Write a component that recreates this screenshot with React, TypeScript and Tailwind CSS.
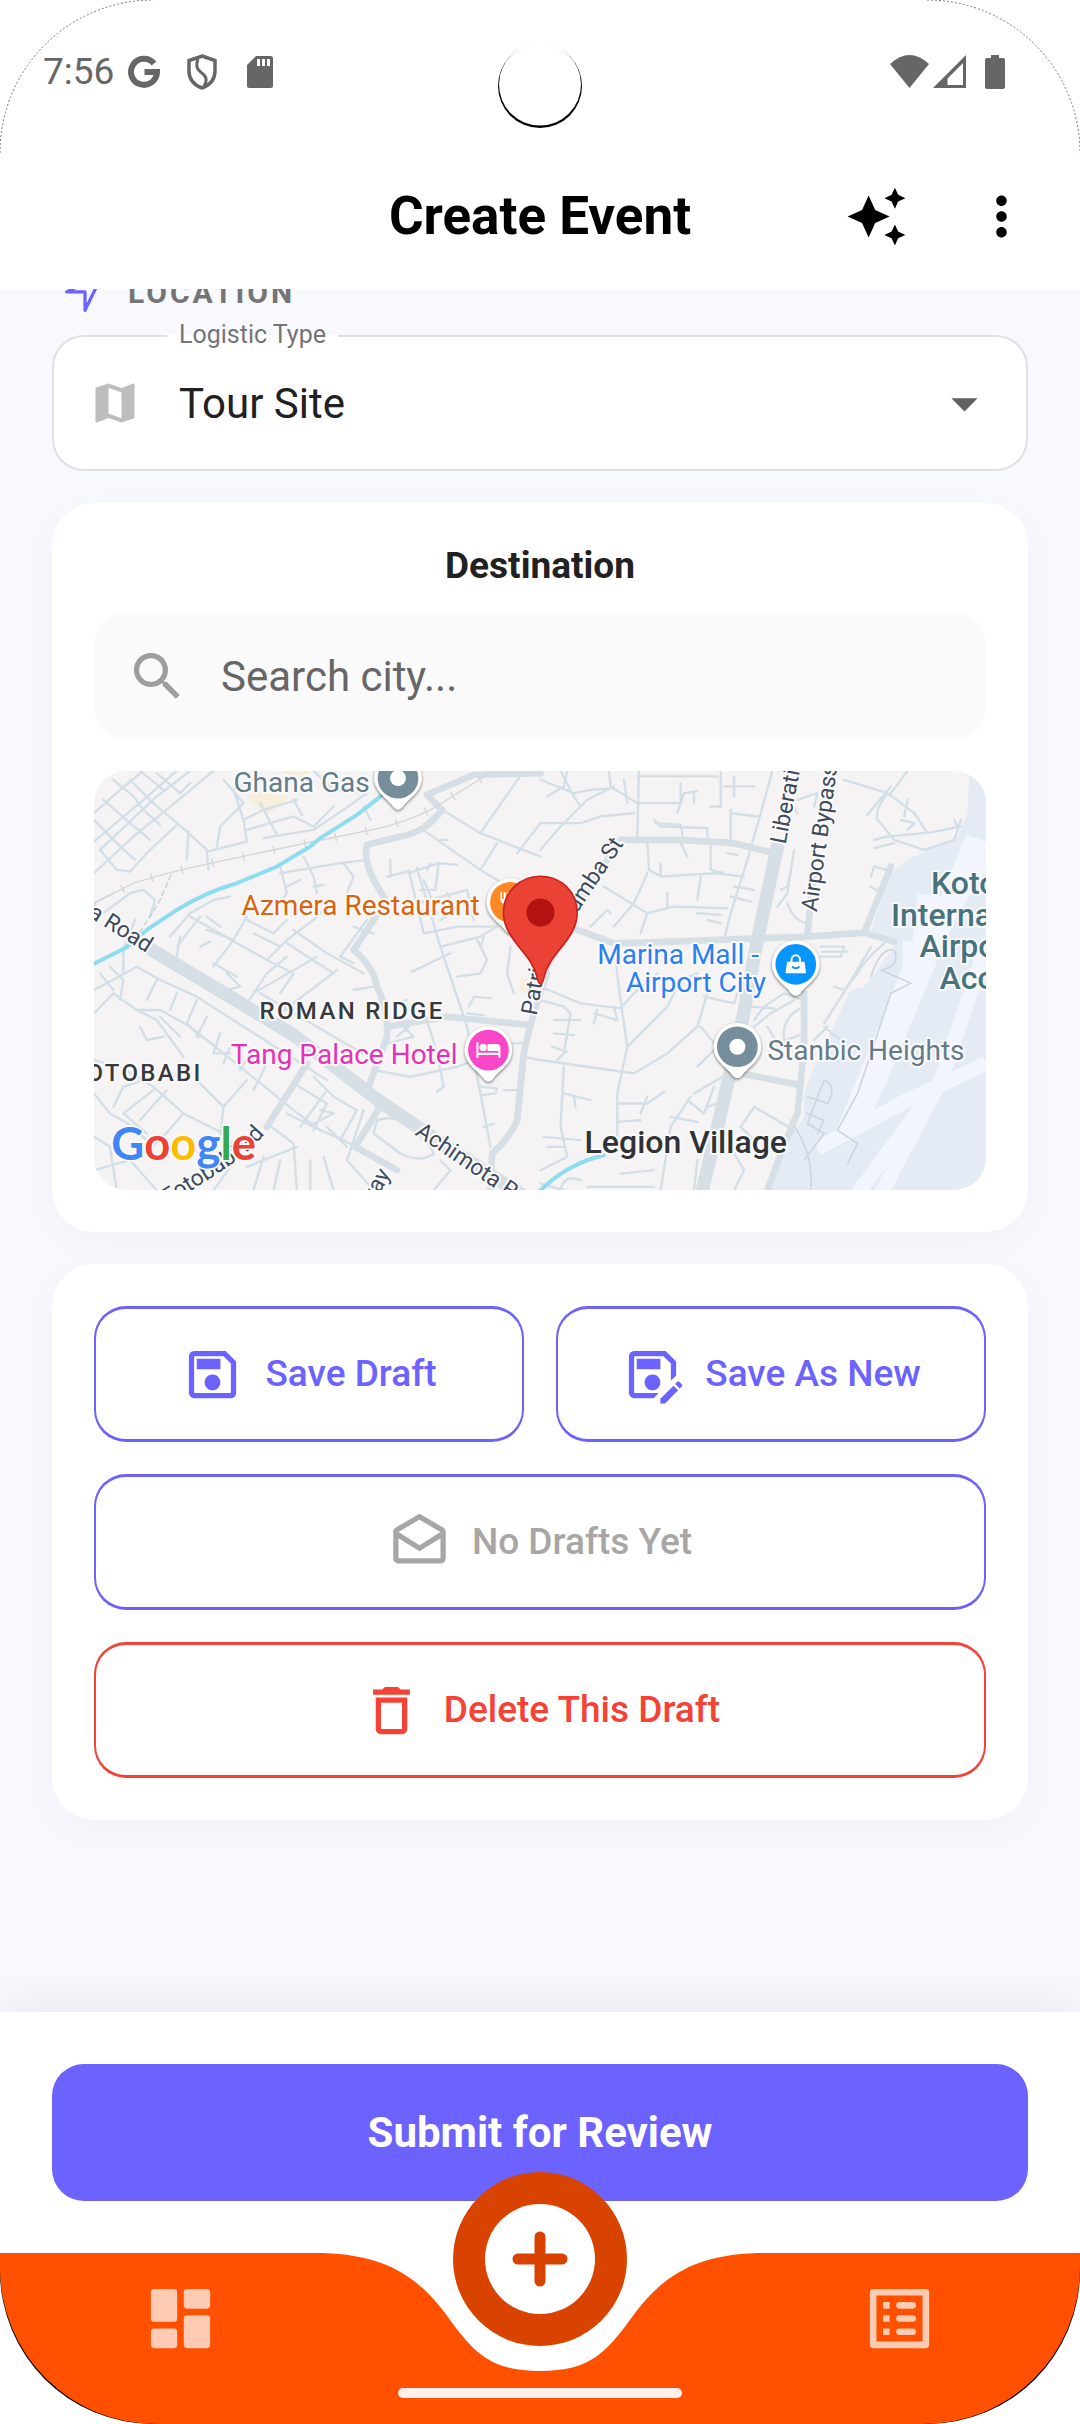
import type { ReactNode } from "react";
import {
  MdArrowDropDown,
  MdAutoAwesome,
  MdDeleteOutline,
  MdMap,
  MdMoreVert,
  MdOutlineDrafts,
  MdOutlineSave,
  MdOutlineSaveAs,
  MdSearch,
} from "react-icons/md";
import { clsx } from "clsx";

const logisticTypes = ["Tour Site", "Hotel", "Restaurant", "Airport Transfer"];

function StatusBar() {
  return (
    <div className="relative flex h-[143px] items-center justify-between pl-[43px] pr-[75px] text-[#666666]">
      <div className="flex items-center">
        <span className="w-[84px] text-[37px] leading-[42px]">7:56</span>
        <svg viewBox="0 0 34 34" className="h-[34px] w-[34px]" aria-hidden="true">
          <path
            d="M27 8.5A13 13 0 1 0 30 17H17.5"
            fill="none"
            stroke="currentColor"
            strokeWidth="6"
          />
        </svg>
        <svg viewBox="0 0 30 36" className="ml-[26px] h-[36px] w-[30px]" aria-hidden="true">
          <path
            d="M15 2L28 6.500V17C28 25 23 31 15 34C7 31 2 25 2 17V6.500Z"
            fill="none"
            stroke="currentColor"
            strokeWidth="3.500"
          />
          <path
            d="M11 5C8 14 11 16 16 20C20 23 20 28 17 32"
            fill="none"
            stroke="currentColor"
            strokeWidth="3"
          />
        </svg>
        <svg viewBox="0 0 26 32" className="ml-[30px] h-[32px] w-[26px]" aria-hidden="true">
          <path
            fillRule="evenodd"
            d="M9 0H23.500Q26 0 26 2.500V29.500Q26 32 23.500 32H2.500Q0 32 0 29.500V9ZM10 3V10H13V3ZM15 3V10H18V3ZM20 3V10H23V3Z"
            fill="currentColor"
          />
        </svg>
      </div>

      <svg
        viewBox="0 0 84 84"
        className="absolute left-1/2 top-[44px] h-[84px] w-[84px] -translate-x-1/2"
        aria-hidden="true"
      >
        <circle cx="42" cy="42" r="42" fill="#000" />
        <circle cx="42" cy="40.500" r="41" fill="#fff" />
      </svg>

      <div className="flex items-center">
        <svg viewBox="0 0 39 33" className="h-[33px] w-[39px]" aria-hidden="true">
          <path d="M0 9Q19.500 -9 39 9L19.500 33Z" fill="currentColor" />
        </svg>
        <svg viewBox="0 0 33 33" className="ml-[4px] h-[33px] w-[33px]" aria-hidden="true">
          <path
            fillRule="evenodd"
            d="M33 0V33H0ZM30 8L14.500 23.500V30H30Z"
            fill="currentColor"
          />
        </svg>
        <svg viewBox="0 0 20 34" className="ml-[19px] h-[34px] w-[20px]" aria-hidden="true">
          <path
            d="M6 0H14V3H18Q20 3 20 5V32Q20 34 18 34H2Q0 34 0 32V5Q0 3 2 3H6Z"
            fill="currentColor"
          />
        </svg>
      </div>
    </div>
  );
}

function AppBar() {
  return (
    <div className="grid h-[146px] grid-cols-[1fr_auto_1fr] items-center">
      <span />
      <h1 className="text-[53px] font-bold leading-[60px] text-black">Create Event</h1>
      <div className="flex items-center justify-end gap-[62px] pr-[47px] text-black">
        <button type="button" aria-label="Generate with AI">
          <MdAutoAwesome className="size-[63px]" />
        </button>
        <button type="button" aria-label="More options">
          <MdMoreVert className="size-[63px]" />
        </button>
      </div>
    </div>
  );
}

const majorRoads = [
  "M215 570L400 680L640 825L900 1025L1100 1160L1380 1340",
  "M2090 260L2030 540L1985 780L1920 1060L1860 1310",
];

const mediumRoads = [
  "M1380 40L1180 45L1040 105L1085 150Q1040 215 960 230L860 255Q850 300 880 360L915 420L880 480L820 570Q880 620 890 680Q925 750 920 830L865 980",
  "M920 800L1100 770L1345 795",
  "M1400 640Q1350 780 1330 880L1310 1080Q1290 1130 1235 1180L1230 1300",
  "M680 910L560 1100",
  "M905 1030L825 1160L950 1230",
  "M1380 470L1480 505L1600 550L1780 545L2030 535L2180 530L2350 518L2440 545",
  "M1400 620L1500 420L1620 240L1800 240L1960 250L2080 280",
  "M2180 520L2200 330",
  "M2170 700L2170 860L2150 1060Q2110 1150 2060 1290",
  "M1980 940L2160 975",
  "M2350 518L2430 320",
];

const minorRoads = [
  "M42 160L120 90L190 33M42 245L190 120L290 33M60 270L230 110L330 33M42 340L160 230L320 100L400 33",
  "M100 60L160 110L190 150L240 195M70 120L150 190L210 240M42 180L110 250L165 300M150 60L220 130L320 215L380 270L385 330",
  "M60 270L110 330L150 335L200 280L290 195M325 215L320 300M230 40L300 100L330 70M180 33L250 90",
  "M380 275L500 245L490 180L550 150L650 120M410 260L420 200L490 130L430 60M490 180L460 90L520 60M500 210L640 170L700 200L760 140",
  "M550 235L700 210L790 150L860 100M540 130L590 225M640 120L665 165M700 33L760 90L850 100M850 140L870 180",
  "M600 320L620 400L590 440M670 290L700 350L710 400M600 340L780 310L860 300M620 380L660 360M700 380L730 375M790 310L820 350L800 400L840 420",
  "M130 640L130 570L165 480M42 480L150 400L190 390L225 420L210 470M42 430L100 400",
  "M270 530L330 460L400 420L450 410M330 470L560 600L620 540L700 480L740 440M290 560L360 470M380 510L460 540L400 620M460 540L500 470M300 530L290 590",
  "M640 510L740 580L850 640M620 550L760 640M560 600L640 640L600 700M500 730L560 640L620 590M520 700L710 590M600 760L770 630M540 700L880 900",
  "M500 480L580 520L620 480M520 520L600 560M440 640L480 680L440 690M360 560L390 545M400 610L470 650M380 470L420 500",
  "M42 690L170 620L240 660L350 710L600 870L740 960M42 760L100 700L170 750L240 750L330 800L480 920L640 1050L720 1110",
  "M90 620L130 660L120 720M60 640L100 690M170 750L230 780L310 890M230 660L200 720M290 700L270 750M350 720L320 790L360 830",
  "M180 800L200 840L250 830M240 770L300 830M380 770L350 830M420 820L400 880L450 880M450 860L430 910M510 880L480 930M560 910L520 990",
  "M42 900L120 920L220 980L310 1060L430 1120L500 1200M42 1000L90 1060L160 1100L220 1160M100 1040L130 980L190 960M220 990L130 1060L200 1120M260 990L180 1080",
  "M310 1060L240 1140L170 1190M430 1040L350 960M430 1040L500 960M430 1040L420 1130M560 1090L640 1150L650 1290M620 1060L720 1110L790 1140L880 1190",
  "M640 970L740 1030L700 1110M700 950L760 1010L830 1050M740 990L660 1100M720 1050L760 1060L700 1090M830 1050L780 1140M850 1050L800 1200L880 1290M800 1160L740 1100",
  "M42 1130L90 1160L110 1290M42 1230L150 1200L230 1290M480 1180L400 1290M550 1190L520 1290M650 1160L500 1220M600 1200L580 1290M690 1200L690 1290M730 1190L760 1290",
  "M880 1120L890 1080Q950 1060 1020 1110L1060 1180Q1020 1210 960 1180L880 1120M1080 1200L1110 1230L1060 1290M1130 1200L1180 1210",
  "M1020 205L1200 330L1380 440M1020 205L1080 150M1085 150L1200 220L1380 290M1200 220L1330 33M1250 250L1200 330M1100 240L1080 240M1310 280L1380 190",
  "M985 330L1030 520L1130 500L1250 500M1010 325L1080 560L1160 800L1200 1000L1230 1160M985 340L1075 310L1065 390L1020 390M1050 310L1040 330M920 350L980 335M930 350L930 300M1075 310L1130 315",
  "M1010 430L1160 390L1180 480M1030 360L1070 460M1100 400L1130 450L1080 480M1080 560L1200 530L1250 500M1190 540L1210 580L1220 600L1200 640L1130 650M1210 530L1200 560",
  "M995 635L1110 580M1040 780L1070 880L1090 980L1070 995M920 850L1000 830M970 800L1000 830M1165 740L1180 710L1230 715M1160 760L1210 765M880 930L990 950L1130 920L1210 890",
  "M1200 980L1250 985L1245 1000L1205 1005M1270 990L1310 990M1240 1090L1210 1100M1330 890L1380 900M1290 850L1340 850M1290 560L1280 640L1300 700",
  "M820 690L880 680M940 730L980 720M950 830L985 800L960 770M820 610L780 590L860 480M880 520L820 500",
  "M1380 60L1480 100L1530 90L1600 85M1380 190L1500 190L1560 170L1660 160M1380 270L1440 200L1520 120L1600 80M1440 33L1480 110L1500 140M1400 110L1450 80L1460 33",
  "M1675 33L1670 230M1585 33L1590 80L1670 130L1800 130L1800 70M1630 60L1640 130M1670 50L1910 50M1920 33L1920 140L1890 140M1790 160L1810 100L1850 95M1840 130L1840 100",
  "M1720 180L1740 200L1880 205L1880 230M1725 190L1800 195L1810 250M1930 80L2020 80M1960 50L1960 110M2075 33L2040 160L2000 300L1950 460L1930 540M1950 160L2030 170M1950 150L1950 240",
  "M1700 245L1705 330L1740 350L1900 340L1990 350M1570 380L1700 460L1780 440L1940 445M1700 340L1660 430L1600 500M1700 460L1680 520M1890 260L1890 330L1930 340M1800 250L1820 290M1740 350L1740 310",
  "M1530 500L1580 450L1590 460M1850 460L1920 465M1880 480L1920 490M1760 440L1760 400M1860 350L1850 420M1940 280L1970 285M1960 380L2020 390M1950 410L2010 425",
  "M1600 560L1620 720L1640 860L1610 1000L1610 1150M1380 680L1500 730L1620 745L1660 700L1730 640M1640 860L1760 740L1800 660L1850 640M1540 760L1610 780L1600 740M1550 750L1540 790",
  "M1380 720L1450 740L1470 760L1450 880L1430 900M1420 780L1500 780M1420 820L1480 825M1415 860L1460 875M1380 900L1520 920L1660 940L1760 880L1850 800L1880 700",
  "M1450 920L1440 1100L1460 1190L1380 1230M1450 1000L1530 1020M1480 1010L1485 1040M1390 1130L1500 1140M1400 1160L1450 1160M1610 1030L1700 1030L1750 995M1680 1060L1700 1010M1610 1085L1680 1080",
  "M1860 800L1910 860L1850 920M1840 1000L1960 930M1830 1010L1770 1100L1740 1290M1820 1020L1870 1060L1900 980M1770 1070L1850 1085M1880 1040L1910 1030M1870 710L1960 730L1970 700",
  "M1980 1100L2020 1040L2140 1110L2100 1170M1980 1100L2020 1140L1960 1180L1990 1230L1960 1290M1380 1270L1450 1290M1440 1290Q1450 1240 1500 1260M1520 1280L1720 1280M1850 1200L1840 1290M1620 1240L1720 1230",
  "M2010 740L2080 745M2020 780L2050 740L2110 700L2170 720M2060 800L2090 850L2170 820M2020 800L2070 760L2140 720M2110 840Q2100 770 2170 740M2140 270L2120 400L2090 440M2130 330L2120 380L2100 390",
  "M2120 430Q2140 490 2190 490M2150 120L2210 100L2200 140M2110 90L2150 160M2220 560L2290 560L2280 590L2220 590M2225 575L2300 575M2260 680L2290 690L2330 640Q2350 600 2410 550",
  "M2290 60L2420 100L2500 160L2540 220L2640 200M2430 100L2480 33M2420 100Q2380 150 2390 180L2440 240L2530 270L2620 240L2640 180M2360 165L2430 80M2480 120L2470 170M2380 240L2420 230L2530 220",
  "M2370 350L2380 320L2420 330L2400 400L2370 380M2240 800L2200 840M2230 790L2300 680L2370 560M2230 800L2290 850M2460 180L2500 190L2480 210M2620 180L2630 200M2380 265L2440 250",
];

const airportLines = [
  "M2370 650Q2400 560 2440 570Q2460 620 2400 630L2490 670L2430 700L2330 1000L2270 1110L2330 1150L2300 1210",
  "M2230 960L2180 1090L2230 1120L2170 1200M2230 960Q2270 980 2240 1030L2180 1010M2180 1060L2230 1080L2210 1120M2130 1080Q2200 1180 2190 1290",
];

type PinProps = {
  x: number;
  y: number;
  color: string;
  children?: ReactNode;
};

function PlacePin({ x, y, color, children }: PinProps) {
  return (
    <g transform={`translate(${x} ${y})`}>
      <path
        d="M-71 0A71 71 0 1 1 71 0C71 42 34 58 14 86Q0 102 -14 86C-34 58 -71 42 -71 0Z"
        fill="#fff"
        filter="url(#pin-shadow)"
      />
      <circle r="61" fill={color} />
      {children}
    </g>
  );
}

function DestinationMap() {
  return (
    <svg
      viewBox="42 33 2673 1257"
      preserveAspectRatio="xMidYMid slice"
      className="mt-8 h-[419px] w-full rounded-[32px] bg-[#f5f3f3]"
      role="img"
      aria-label="Map of Roman Ridge and Airport City"
    >
      <defs>
        <filter id="pin-shadow" x="-30%" y="-30%" width="160%" height="160%">
          <feDropShadow dx="0" dy="4" stdDeviation="5" floodColor="#000" floodOpacity="0.55" />
        </filter>
        <path id="fotobabi" d="M262 1335Q400 1250 450 1215Q530 1160 585 1080" />
      </defs>

      {/* land use */}
      <path
        d="M2665 33L2660 160L2630 230L2480 300L2430 340L2370 510L2440 560L2350 680L2310 690L2200 920L2170 1000L2170 1070L2130 1130L2080 1220L2070 1290H2715V33Z"
        fill="#e4ebf5"
      />
      <path
        d="M2655 225L2715 245V330L2620 480L2420 960L2350 1110L2330 1130L2270 1100L2465 620L2465 540L2495 545L2510 400L2580 410Z"
        fill="#f2f4fe"
      />
      <path
        d="M2715 560L2580 960L2400 1300M2530 1030L2330 1300M2715 910L2470 1025L2210 1165"
        fill="none"
        stroke="#f2f4fe"
        strokeWidth="44"
      />
      <path d="M505 110L530 95L625 110L590 150L560 160L505 125ZM1320 650L1370 660L1350 710L1315 690ZM600 33H690L660 60Z" fill="#f7efdb" />

      <g fill="none" strokeLinejoin="round" strokeLinecap="round">
        <g stroke="#d2dfe8" strokeWidth="7">
          {minorRoads.map((d) => (
            <path key={d} d={d} />
          ))}
        </g>
        <g stroke="#ced5e2" strokeWidth="5">
          {airportLines.map((d) => (
            <path key={d} d={d} />
          ))}
        </g>
        <g stroke="#d6dfe6" strokeWidth="20">
          {mediumRoads.map((d) => (
            <path key={d} d={d} />
          ))}
        </g>
        <g stroke="#d6dfe6" strokeWidth="40">
          {majorRoads.map((d) => (
            <path key={d} d={d} />
          ))}
        </g>
        <path
          d="M42 430L160 370Q250 340 400 308L700 245L900 205Q1030 170 1100 120L1240 33"
          stroke="#d4d5d6"
          strokeWidth="4"
        />
        <path
          d="M42 430L160 370Q250 340 400 308L700 245L900 205Q1030 170 1100 120L1240 33"
          stroke="#d4d5d6"
          strokeWidth="26"
          strokeDasharray="4 90"
          strokeLinecap="butt"
        />
        <path d="M273 345L240 420L210 470L180 515" stroke="#bfd0d5" strokeWidth="4" strokeDasharray="16 10" />
        <path
          d="M35 615L140 562L200 510L290 450Q380 395 470 370L590 320L690 260L720 235L830 165L920 95M1375 1295Q1460 1210 1570 1185"
          stroke="#8edcf0"
          strokeWidth="12"
        />
      </g>

      <g
        stroke="#faf9f9"
        strokeWidth="12"
        strokeLinejoin="round"
        className="[paint-order:stroke]"
        fontSize="68"
        fill="#3c4a5c"
      >
        <text transform="translate(22 468) rotate(32)">a Road</text>
        <text>
          <textPath href="#fotobabi">Fotobabi Rd</textPath>
        </text>
        <text transform="translate(872 1345) rotate(-60)">way</text>
        <text transform="translate(1002 1122) rotate(34)">Achimota Rd</text>
        <text transform="translate(1368 768) rotate(-80)">Patrice</text>
        <text transform="translate(1456 510) rotate(-56)">mumba St</text>
        <text transform="translate(2114 255) rotate(-79)">Liberation Rd</text>
        <text transform="translate(2208 457) rotate(-82)">Airport Bypass Rd</text>

        <g fontSize="84">
          <text x="460" y="96" fill="#647c89">Ghana Gas</text>
          <text x="484" y="465" fill="#d9640f">Azmera Restaurant</text>
          <text x="452" y="912" fill="#e731b4">Tang Palace Hotel</text>
          <text x="1550" y="612" fill="#2b7ff0">Marina Mall -</text>
          <text x="1636" y="697" fill="#2b7ff0">Airport City</text>
          <text x="2060" y="901" fill="#647c89">Stanbic Heights</text>
        </g>
        <g fontSize="72" fontWeight="500" fill="#37393d" letterSpacing="7">
          <text x="538" y="776">ROMAN RIDGE</text>
          <text x="-32" y="963">KOTOBABI</text>
        </g>
        <text x="1512" y="1177" fontSize="96" fontWeight="500" fill="#303236">
          Legion Village
        </text>
        <g fontSize="96" fontWeight="500" fill="#47737f">
          <text x="2550" y="401">Kotoka</text>
          <text x="2430" y="497">International</text>
          <text x="2516" y="592">Airport</text>
          <text x="2576" y="688">Accra</text>
        </g>
      </g>

      <PlacePin x={953} y={55} color="#768e9b">
        <circle r="24" fill="#fff" />
      </PlacePin>
      <PlacePin x={1290} y={427} color="#ff8826">
        <path
          d="M-30 -30V-8Q-30 2 -20 4V30H-14V4Q-4 2 -4 -8V-30H-9V-10H-14V-30H-20V-10H-25V-30Z"
          fill="#fff"
        />
      </PlacePin>
      <PlacePin x={1224} y={870} color="#fa46c8">
        <path
          d="M-36 -24H-30V8H30V-4H36V24H30V15H-30V24H-36ZM-3 -18H24Q36 -18 36 -6V3H-3Z"
          fill="#fff"
        />
        <circle cx="-16" cy="-8" r="11" fill="#fff" />
      </PlacePin>
      <PlacePin x={2145} y={613} color="#0795ff">
        <path d="M-26 -8H26L31 27H-31Z" fill="#fff" />
        <path d="M-13 -6V-12A13 15 0 0 1 13 -12V-6" fill="none" stroke="#fff" strokeWidth="6" />
        <path d="M-11 6Q0 18 11 6" fill="none" stroke="#0795ff" strokeWidth="6" />
      </PlacePin>
      <PlacePin x={1970} y={860} color="#768e9b">
        <circle r="24" fill="#fff" />
      </PlacePin>

      <path
        d="M1380 349C1443 349 1490 398 1490 458C1490 540 1405 580 1391 650Q1386 672 1380 672Q1374 672 1369 650C1355 580 1269 540 1269 458C1269 398 1317 349 1380 349Z"
        fill="#ea4335"
        stroke="#c5221f"
        strokeWidth="5"
      />
      <circle cx="1380" cy="458" r="42" fill="#b31412" />

      <text
        x="94"
        y="1198"
        fontSize="136"
        fontWeight="700"
        fontFamily="Lato, sans-serif"
        stroke="#fafafa"
        strokeWidth="10"
        className="[paint-order:stroke]"
      >
        <tspan fill="#4285f4">G</tspan>
        <tspan fill="#ea4335">o</tspan>
        <tspan fill="#fbbc04">o</tspan>
        <tspan fill="#4285f4">g</tspan>
        <tspan fill="#34a853">l</tspan>
        <tspan fill="#ea4335">e</tspan>
      </text>
    </svg>
  );
}

type ActionTone = "primary" | "muted" | "danger";

type ActionButtonProps = {
  icon: ReactNode;
  label: string;
  tone?: ActionTone;
  className?: string;
};

function ActionButton({ icon, label, tone = "primary", className }: ActionButtonProps) {
  return (
    <button
      type="button"
      disabled={tone === "muted"}
      className={clsx(
        "flex h-[136px] items-center justify-center gap-[21px] rounded-[32px] border-x-2 border-y-3 text-[37px] font-medium leading-[42px]",
        tone === "danger" ? "border-[#f44336]" : "border-[#6c63ff]",
        tone === "primary" && "text-[#6c63ff]",
        tone === "muted" && "text-[#a8a6a5]",
        tone === "danger" && "text-[#f44336]",
        className,
      )}
    >
      {icon}
      {label}
    </button>
  );
}

const cardClass =
  "rounded-[42px] bg-white p-[42px] shadow-[0_10px_40px_rgba(0,0,0,0.03)]";

function BottomNav() {
  return (
    <nav className="relative flex h-[171px]">
      <div className="flex-1 rounded-bl-[153px] bg-black">
        <div className="h-full rounded-bl-[156px] bg-[#ff5000] pl-[141px] pt-[26px]">
          <a href="#dashboard" aria-label="Dashboard" className="block size-[79px]">
            <svg viewBox="0 0 24 24" className="size-full fill-white/70" aria-hidden="true">
              <rect x="3" y="3" width="8" height="10" rx="1" />
              <rect x="13" y="3" width="8" height="6" rx="1" />
              <rect x="3" y="15" width="8" height="6" rx="1" />
              <rect x="13" y="11" width="8" height="10" rx="1" />
            </svg>
          </a>
        </div>
      </div>
      <svg viewBox="0 0 434 171" className="h-[171px] w-[434px]" aria-hidden="true">
        <path
          d="M0 0C58 2 92 20 122 60C150 99 166 118 217 118C268 118 284 99 312 60C342 20 376 2 434 0V171H0Z"
          fill="#ff5000"
        />
      </svg>
      <div className="flex-1 rounded-br-[153px] bg-black">
        <div className="flex h-full justify-end rounded-br-[156px] bg-[#ff5000] pr-[141px] pt-[26px]">
          <a href="#events" aria-label="Events" className="block size-[79px]">
            <svg viewBox="0 0 24 24" className="size-full fill-white/70" aria-hidden="true">
              <path
                fillRule="evenodd"
                d="M4 3H20Q21 3 21 4V20Q21 21 20 21H4Q3 21 3 20V4Q3 3 4 3ZM5 5V19H19V5Z"
              />
              <path d="M7 7H9V9H7ZM7 11H9V13H7ZM7 15H9V17H7Z" />
              <rect x="11" y="7" width="6" height="2" rx="1" />
              <rect x="11" y="11" width="6" height="2" rx="1" />
              <rect x="11" y="15" width="6" height="2" rx="1" />
            </svg>
          </a>
        </div>
      </div>

      <button
        type="button"
        aria-label="Create"
        className="absolute -top-[81px] left-1/2 flex size-[174px] -translate-x-1/2 items-center justify-center rounded-full bg-[#d84400]"
      >
        <svg viewBox="0 0 112 112" className="size-[112px]" aria-hidden="true">
          <circle cx="56" cy="56" r="55" fill="#fff" />
          <path
            d="M56 34V78M34 56H78"
            stroke="#d84400"
            strokeWidth="11"
            strokeLinecap="round"
          />
        </svg>
      </button>
      <div className="absolute bottom-[26px] left-1/2 h-[10px] w-[284px] -translate-x-1/2 rounded-full bg-[#fff0eb]" />
    </nav>
  );
}

export default function App() {
  return (
    <div className="relative flex min-h-screen flex-col bg-[#f8f9ff] font-[Roboto,sans-serif]">
      <header className="relative z-10 bg-white">
        <StatusBar />
        <AppBar />
        <svg viewBox="0 0 160 160" className="absolute left-0 top-0 size-[160px]" aria-hidden="true">
          <path d="M0 153A153 153 0 0 1 153 0" fill="none" stroke="#777" strokeDasharray="2 2" />
        </svg>
        <svg viewBox="0 0 160 160" className="absolute right-0 top-0 size-[160px]" aria-hidden="true">
          <path d="M7 0A153 153 0 0 1 160 153" fill="none" stroke="#777" strokeDasharray="2 2" />
        </svg>
      </header>

      <main className="flex-1 overflow-hidden px-[52px] pb-8">
        <div className="-mt-[22px] flex h-[52px] items-center gap-[17px] pl-[7px]">
          <svg viewBox="0 0 24 24" className="size-[52px]" aria-hidden="true">
            <path
              d="M3.500 11.500L20 3.500L12 20V11.500Z"
              fill="none"
              stroke="#6c63ff"
              strokeWidth="1.500"
              strokeLinejoin="round"
            />
          </svg>
          <h2 className="text-[30px] font-bold leading-[38px] tracking-widest text-[#757575]">
            LOCATION
          </h2>
        </div>

        <fieldset className="mt-[2px] rounded-[32px] border-2 border-[#e0e0e0] bg-white">
          <legend className="ml-[113px] h-[30px] px-[12px] text-[25px] leading-[28px] text-[#757575]">
            <label htmlFor="logistic-type">Logistic Type</label>
          </legend>
          <div className="-mt-3.5 flex h-[132px] items-center pl-[35px] pr-[30px]">
            <MdMap className="size-[52px] shrink-0 text-[#bdbdbd]" />
            <select
              id="logistic-type"
              className="h-full min-w-0 flex-1 appearance-none bg-transparent pl-[38px] text-[42px] text-[#212121] outline-none"
            >
              {logisticTypes.map((type) => (
                <option key={type}>{type}</option>
              ))}
            </select>
            <MdArrowDropDown className="pointer-events-none -ml-[63px] size-[63px] text-[#616161]" />
          </div>
        </fieldset>

        <section className={clsx(cardClass, "mt-8")}>
          <h2 className="text-center text-[37px] font-bold leading-[42px] text-[#212121]">
            Destination
          </h2>
          <label className="mt-[26px] flex h-[126px] items-center gap-[32px] rounded-[32px] bg-[#fafafa] pl-[32px] pr-8">
            <MdSearch className="size-[63px] shrink-0 text-[#9e9e9e]" />
            <input
              type="text"
              aria-label="Search city"
              placeholder="Search city..."
              className="min-w-0 flex-1 bg-transparent text-[42px] text-[#212121] outline-none placeholder:text-[#666666]"
            />
          </label>
          <DestinationMap />
        </section>

        <section className={clsx(cardClass, "mt-8 grid grid-cols-2 gap-8")}>
          <ActionButton icon={<MdOutlineSave className="size-[63px]" />} label="Save Draft" />
          <ActionButton icon={<MdOutlineSaveAs className="size-[63px]" />} label="Save As New" />
          <ActionButton
            icon={<MdOutlineDrafts className="size-[63px]" />}
            label="No Drafts Yet"
            tone="muted"
            className="col-span-2"
          />
          <ActionButton
            icon={<MdDeleteOutline className="size-[63px]" />}
            label="Delete This Draft"
            tone="danger"
            className="col-span-2"
          />
        </section>
      </main>

      <footer className="bg-white shadow-[0_-10px_40px_rgba(0,0,0,0.06)]">
        <div className="px-[52px] py-[52px]">
          <button
            type="submit"
            className="h-[137px] w-full rounded-[32px] bg-[#6c63ff] text-[42px] font-bold text-white"
          >
            Submit for Review
          </button>
        </div>
        <BottomNav />
      </footer>
    </div>
  );
}
